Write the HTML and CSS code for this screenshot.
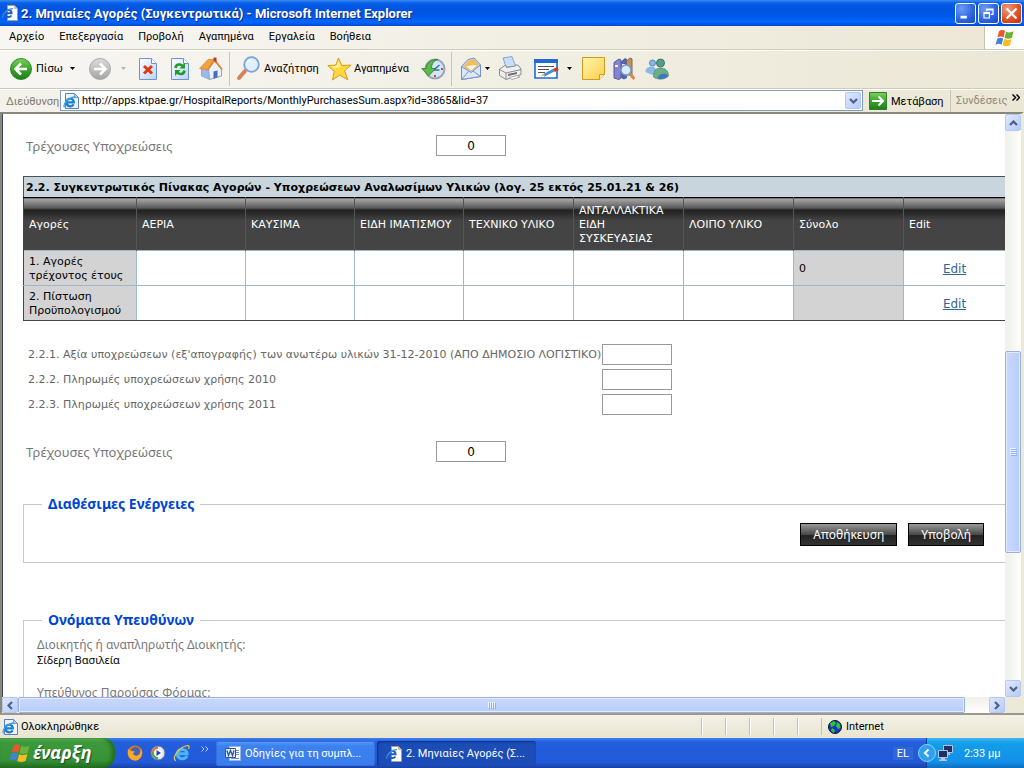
FILE: index.html
```html
<!DOCTYPE html>
<html lang="el">
<head>
<meta charset="utf-8">
<title>2. Μηνιαίες Αγορές (Συγκεντρωτικά) - Microsoft Internet Explorer</title>
<link rel="stylesheet" href="styles.css">
</head>
<body>
<svg class="defs" width="0" height="0" aria-hidden="true">
  <defs>
    <linearGradient id="gGreen" x1="0" y1="0" x2="0" y2="1"><stop offset="0" stop-color="#7bd25c"/><stop offset=".5" stop-color="#3aa52c"/><stop offset="1" stop-color="#1f7d1a"/></linearGradient>
    <linearGradient id="gGrey" x1="0" y1="0" x2="0" y2="1"><stop offset="0" stop-color="#dcdcdc"/><stop offset="1" stop-color="#a4a4a4"/></linearGradient>
    <linearGradient id="gPage" x1="0" y1="0" x2="1" y2="1"><stop offset="0" stop-color="#ffffff"/><stop offset="1" stop-color="#b9d2f8"/></linearGradient>
    <linearGradient id="gNote" x1="0" y1="0" x2="1" y2="1"><stop offset="0" stop-color="#fff6ae"/><stop offset="1" stop-color="#f8cf4c"/></linearGradient>
    <symbol id="winflag" viewBox="0 0 20 18">
      <path fill="#e8572b" d="M4 2.200C6 .8 8 .8 10 2L8.500 8.500C6.500 7.300 4.500 7.300 2.500 8.600Z"/>
      <path fill="#6cb33a" d="M11 2.500C13 3.700 15.500 3.700 18.500 2.300L17 8.800C14.500 10.100 12 10.100 9.500 9Z"/>
      <path fill="#3f83dc" d="M2.200 9.700C4.200 8.400 6.300 8.400 8.200 9.600L6.600 15.700C4.700 14.500 2.800 14.500.6 15.900Z"/>
      <path fill="#f8bd23" d="M9.200 10.100C11.500 11.200 14.200 11.200 16.700 9.900L15 16.200C12.500 17.500 9.800 17.500 7.500 16.300Z"/>
    </symbol>
    <symbol id="iepage" viewBox="0 0 16 16">
      <path fill="#fff" stroke="#a79f8a" d="M5.500.500h7l3 3v12h-10z"/>
      <path fill="#d9c9a3" stroke="#a79f8a" stroke-width=".6" d="M12.500.500v3h3z"/>
      <path fill="none" stroke="#1f5fc0" stroke-width="1.900" d="M3 8.300h6.600C9.600 4.300 3.600 4 3 8.200 2.700 12.300 7.600 13.200 9.400 10.400"/>
      <path fill="none" stroke="#3b93e4" stroke-width="1.200" d="M1 12.800C-.3 9.500 5.500 3.500 11 3.600"/>
    </symbol>
    <symbol id="iedoc" viewBox="0 0 16 16">
      <path fill="#eef3fb" stroke="#5f7fb5" d="M2.500.500h9l4 4v11h-13z"/>
      <path fill="#c3d3ec" stroke="#5f7fb5" stroke-width=".7" d="M11.500.500v4h4z"/>
      <path fill="none" stroke="#1c7fd0" stroke-width="2.200" d="M3.500 9.300h7.300C10.800 4.700 4 4.500 3.500 9.200 3.300 13.600 8.700 14.600 10.700 11.400"/>
      <path fill="none" stroke="#3ba3ea" stroke-width="1.300" d="M1.500 14.300C-.5 11 6 3.700 12.500 4"/>
    </symbol>
    <symbol id="ie" viewBox="0 0 18 18">
      <path fill="none" stroke="#4cb6f5" stroke-width="3" d="M4.500 9.700h9.700C14 4.200 5.300 3.800 4.300 9.500 4 15 11.500 16.500 14 12"/>
      <path fill="none" stroke="#e7c04b" stroke-width="1.300" d="M3 16.500C-1.500 15.500 4 6 10 3c5-2.600 7.300-1.500 5.500 2"/>
    </symbol>
  </defs>
</svg>
<div class="window">
  <header class="titlebar">
    <svg class="i16" viewBox="0 0 16 16"><use href="#iepage"/></svg>
    <h1>2. Μηνιαίες Αγορές (Συγκεντρωτικά) - Microsoft Internet Explorer</h1>
    <div class="caption-buttons">
      <button class="cap" aria-label="Ελαχιστοποίηση"><svg viewBox="0 0 21 21"><path fill="#fff" d="M5 13h7v3H5z"/></svg></button>
      <button class="cap" aria-label="Επαναφορά"><svg viewBox="0 0 21 21"><path fill="none" stroke="#fff" stroke-width="1.300" d="M8.500 8V5.500h7v6H13M8 6.500h7"/><path fill="none" stroke="#fff" stroke-width="1.300" d="M5.500 9.500h6v6h-6zM5 10.500h7"/></svg></button>
      <button class="cap close" aria-label="Κλείσιμο"><svg viewBox="0 0 21 21"><path stroke="#fff" stroke-width="2.400" d="M5 5l11 11M16 5L5 16"/></svg></button>
    </div>
  </header>

  <nav class="menubar">
    <div class="menus">
      <button>Αρχείο</button><button>Επεξεργασία</button><button>Προβολή</button><button>Αγαπημένα</button><button>Εργαλεία</button><button>Βοήθεια</button>
    </div>
    <div class="brand"><svg width="20" height="18"><use href="#winflag"/></svg></div>
  </nav>

  <div class="toolbar">
    <button class="tool back"><svg width="24" height="24" viewBox="0 0 24 24"><circle cx="12" cy="12" r="10.500" fill="url(#gGreen)" stroke="#2f8a29"/><path fill="none" stroke="#fff" stroke-width="2.600" d="M18 12H7.500M12 6.500L6.500 12l5.500 5.500"/></svg><span>Πίσω</span></button>
    <button class="drop" aria-label="Ιστορικό πίσω"><svg width="5" height="3" viewBox="0 0 5 3"><path d="M0 0h5L2.500 3z"/></svg></button>
    <button class="tool fwd" aria-label="Εμπρός"><svg width="24" height="24" viewBox="0 0 24 24"><circle cx="12" cy="12" r="10.500" fill="url(#gGrey)" stroke="#a9a9a9"/><path fill="none" stroke="#fff" stroke-width="2.600" d="M6 12h10.500M12 6.500l5.500 5.500-5.500 5.500"/></svg></button>
    <button class="drop off" aria-label="Ιστορικό εμπρός"><svg width="5" height="3" viewBox="0 0 5 3"><path fill="#b9b6a8" d="M0 0h5L2.500 3z"/></svg></button>
    <button class="tool" aria-label="Διακοπή"><svg width="20" height="24" viewBox="0 0 20 24"><path fill="url(#gPage)" stroke="#6d93d6" d="M1.500 1.500h12l5 5v16h-17z"/><path fill="#fff" stroke="#6d93d6" d="M13.500 1.500v5h5"/><path stroke="#dc3714" stroke-width="3" d="M6 9l8 7.500M14 9l-8 7.500"/></svg></button>
    <button class="tool refresh" aria-label="Ανανέωση"><svg width="20" height="24" viewBox="0 0 20 24"><path fill="url(#gPage)" stroke="#6d93d6" d="M1.500 1.500h12l5 5v16h-17z"/><path fill="#fff" stroke="#6d93d6" d="M13.500 1.500v5h5"/><path fill="none" stroke="#229a28" stroke-width="2.600" d="M5.500 11c.5-4 5-4.500 7-2M14.500 13.500c-.5 4-5 4.500-7 2"/><path fill="#229a28" d="M15 5.500v6H9.500zM5 19v-6h5.500z"/></svg></button>
    <button class="tool home" aria-label="Αρχική σελίδα"><svg width="24" height="24" viewBox="0 0 24 24"><path fill="#9db9e8" stroke="#6f8fcb" stroke-width=".6" d="M2.500 11v8l8 3.500V11z"/><path fill="#e9f1fd" stroke="#86a3d8" d="M9.500 12l6-8 7 8v7l-12 3.500z"/><path fill="#f2a33b" stroke="#c9782a" stroke-width=".6" d="M.5 11.500L9 2.500l6.500 0-6.500 10.500z"/><path fill="none" stroke="#e08a35" stroke-width="2" d="M8.500 13L15.500 3l7.500 9.500"/><path fill="#c63b22" d="M14.500.500h3v5l-3-2z"/><path fill="#4a6fb8" d="M14.500 14.500l4-1v7l-4 1.200z"/></svg></button>
    <span class="rule"></span>
    <button class="tool search"><svg width="24" height="25" viewBox="0 0 24 25"><path stroke="#d9825a" stroke-width="4" stroke-linecap="round" d="M3 22l6-7"/><circle cx="15.500" cy="8.500" r="7.300" fill="#dff0ff" stroke="#7f9fdc" stroke-width="1.800"/><path fill="#fff" d="M10.500 8c.5-3 3-4.500 5.500-4.300-2 .8-4 2.300-5.500 4.300z"/></svg><span>Αναζήτηση</span></button>
    <button class="tool favs"><svg width="25" height="24" viewBox="0 0 25 24"><path fill="#ffd93b" stroke="#d89a18" stroke-linejoin="round" d="M11.500 1l3.400 7.500 9.200-.4-6.600 5.700 3.400 9-8.300-4.700L5.500 23l1.700-8.700L.8 8.700l8-.7z"/><path fill="#fff2a0" d="M11.500 4l2 5.500-6 2-3-2 5-.5z"/></svg><span>Αγαπημένα</span></button>
    <button class="tool hist" aria-label="Ιστορικό"><svg width="25" height="24" viewBox="0 0 25 24"><circle cx="14" cy="12" r="9.500" fill="#d3e5f8" stroke="#9aa7b8" stroke-width="2"/><path fill="none" stroke="#3b6db0" stroke-width="1.500" d="M12.500 13l6-5M12.500 13h6"/><path fill="#d34b2c" d="M13 18h2v2h-2zM20 11h2v2h-2z"/><path fill="#5cba4a" stroke="#28792a" stroke-width=".8" d="M.8 11.500h4C6 5 11 2 17 2.500c-4 1-6.500 4-6.500 9h4.200L7.500 19z"/></svg></button>
    <span class="rule"></span>
    <button class="tool mail" aria-label="Αλληλογραφία"><svg width="22" height="24" viewBox="0 0 22 24"><path fill="#c4daf8" stroke="#7390c9" d="M1.500 9.500L8 2.500 14 1l6.500 7v11.500L1.500 22.500z"/><path fill="#f7bd5b" d="M3.500 9.500L8.500 3.500 14 2l5 6-8 6.500z"/><path fill="#fff" d="M6.500 9l10.500-1-6 5.500z"/><path fill="#dbe8fb" stroke="#7390c9" d="M1.500 9.500l9.500 6L20.500 8v11.500L1.500 22.500z"/><path fill="none" stroke="#7390c9" d="M1.500 22.500l7-8M20.500 19.500L13 14"/></svg></button>
    <button class="drop near" aria-label="Επιλογές αλληλογραφίας"><svg width="5" height="3" viewBox="0 0 5 3"><path d="M0 0h5L2.500 3z"/></svg></button>
    <button class="tool" aria-label="Εκτύπωση"><svg width="24" height="25" viewBox="0 0 24 25"><path fill="#c8defa" stroke="#88a4cf" d="M5 2l9-1.500L18 11H8z"/><path fill="#f0f0f0" stroke="#8c8c8c" d="M1.500 13L7 9.500h1l.5 2 9-1.500-.5-1h3l3 4v5.500L8 23.500l-6.500-4z"/><path fill="none" stroke="#8c8c8c" d="M1.500 13.500L8 17l15-3.500M8 17v6"/><path fill="#6f6f6f" d="M10 18l9-2v2l-9 2z"/><path fill="#fff" stroke="#aaa" d="M11 21.500l8-2 3 1.500-8 2.500z"/></svg></button>
    <button class="tool edit" aria-label="Επεξεργασία"><svg width="25" height="20" viewBox="0 0 25 20"><path fill="#fff" stroke="#1f6ad6" stroke-width="1.600" d="M1 1h22v18H1z"/><path fill="#1f6ad6" d="M0 0h24v4H0z"/><path stroke="#555" d="M4 7.500h16M4 10.500h11M4 13.500h7"/><path stroke="#3f8fe0" stroke-width="3" d="M9.500 16.500L20 11"/><path stroke="#d03c25" stroke-width="3.500" d="M20 11.500l4-2"/><path fill="#f0b85a" d="M6.500 17.500l3-3 1.500 2z"/></svg></button>
    <button class="drop after-edit" aria-label="Επιλογές επεξεργασίας"><svg width="5" height="3" viewBox="0 0 5 3"><path d="M0 0h5L2.500 3z"/></svg></button>
    <button class="tool note" aria-label="Σημείωση"><svg width="23" height="23" viewBox="0 0 23 23"><path fill="url(#gNote)" stroke="#d39a1c" d="M.5.500h22v17l-5 5H.500z"/><path fill="#fff0a0" stroke="#d39a1c" d="M17.500 22.500v-5h5"/></svg></button>
    <button class="tool books" aria-label="Έρευνα"><svg width="22" height="24" viewBox="0 0 22 24"><path fill="#8683d0" stroke="#5a57a0" d="M1 5.500l5-3.500 2 1v18l-2 1.500-5-1.500z"/><path fill="#4f66b5" d="M8 4.500L12 1l2 1v19l-3 1.500-3-1.500z"/><path fill="#b99560" stroke="#86683e" d="M13.500 4l3.500-3 2 1v16h-5.500z"/><path fill="#eee" d="M2 8h3v2H2zM9 7h3v2H9z"/><circle cx="13" cy="13" r="5" fill="#d8ecfd" stroke="#7a97cc" stroke-width="1.500"/><path stroke="#d38a4c" stroke-width="3" d="M17 17l4.500 5"/></svg></button>
    <button class="tool" aria-label="Messenger"><svg width="24" height="22" viewBox="0 0 24 22"><circle cx="7.500" cy="5" r="3" fill="#8fb4e4" stroke="#5d87c4"/><path fill="#8db7e6" d="M.5 14c0-4 3-5.500 6-5.500s5 2 5 6l-4 2.500z"/><circle cx="15.500" cy="5" r="4" fill="#5a9c8a" stroke="#34796b"/><path fill="#6cae88" stroke="#3d8068" stroke-width=".6" d="M8.500 19c0-7 3-9 7-9s8 2 8 8c-4 4-11 4-15 1z"/><path fill="#3f78c0" d="M13 18.500c2-3 7-4 10-1-1 3-6 4-10 3z"/></svg></button>
  </div>

  <div class="addressbar">
    <label for="url">Διεύθυνση</label>
    <div class="urlbox">
      <svg class="i16" viewBox="0 0 16 16"><use href="#iedoc"/></svg>
      <input id="url" type="text" value="http://apps.ktpae.gr/HospitalReports/MonthlyPurchasesSum.aspx?id=3865&amp;lid=37">
      <button class="xpbtn" aria-label="Λίστα διευθύνσεων"><svg width="9" height="6" viewBox="0 0 9 6"><path fill="none" stroke="#4d6185" stroke-width="2.200" d="M1 1l3.500 3.500L8 1"/></svg></button>
    </div>
    <button class="go"><svg width="18" height="18" viewBox="0 0 18 18"><path fill="url(#gGreen)" stroke="#2c7f2c" d="M.5.500h17v17H.500z"/><path fill="none" stroke="#fff" stroke-width="2" d="M3 9h11M9.500 4.500L14 9l-4.500 4.500"/></svg><span>Μετάβαση</span></button>
    <div class="links"><span>Συνδέσεις</span><svg width="8" height="7" viewBox="0 0 8 7"><path fill="none" stroke="#000" stroke-width="1.500" d="M.5.500l3 3-3 3M4.500.500l3 3-3 3"/></svg></div>
  </div>

  <div class="viewport">
    <main class="page">
      <div class="current">
        <label for="cur1">Τρέχουσες Υποχρεώσεις</label><input id="cur1" class="num" type="text" value="0">
      </div>

      <table class="grid">
        <caption>2.2. Συγκεντρωτικός Πίνακας Αγορών - Υποχρεώσεων Αναλωσίμων Υλικών (λογ. 25 εκτός 25.01.21 &amp; 26)</caption>
        <colgroup><col class="c-first"><col class="c-a"><col class="c-a"><col class="c-a"><col class="c-b"><col class="c-b"><col class="c-b"><col class="c-b"><col></colgroup>
        <thead><tr><th>Αγορές</th><th>ΑΕΡΙΑ</th><th>ΚΑΥΣΙΜΑ</th><th>ΕΙΔΗ ΙΜΑΤΙΣΜΟΥ</th><th>ΤΕΧΝΙΚΟ ΥΛΙΚΟ</th><th>ΑΝΤΑΛΛΑΚΤΙΚΑ ΕΙΔΗ ΣΥΣΚΕΥΑΣΙΑΣ</th><th>ΛΟΙΠΟ ΥΛΙΚΟ</th><th>Σύνολο</th><th>Edit</th></tr></thead>
        <tbody>
          <tr><td class="shade">1. Αγορές τρέχοντος έτους</td><td></td><td></td><td></td><td></td><td></td><td></td><td class="shade">0</td><td class="act"><a href="#">Edit</a></td></tr>
          <tr><td class="shade">2. Πίστωση Προϋπολογισμού</td><td></td><td></td><td></td><td></td><td></td><td></td><td class="shade"></td><td class="act"><a href="#">Edit</a></td></tr>
        </tbody>
      </table>

      <div class="values">
        <label for="v1">2.2.1. Αξία υποχρεώσεων (εξ'απογραφής) των ανωτέρω υλικών 31-12-2010 (ΑΠΟ ΔΗΜΟΣΙΟ ΛΟΓΙΣΤΙΚΟ)</label><input id="v1" class="num" type="text">
        <label for="v2">2.2.2. Πληρωμές υποχρεώσεων χρήσης 2010</label><input id="v2" class="num" type="text">
        <label for="v3">2.2.3. Πληρωμές υποχρεώσεων χρήσης 2011</label><input id="v3" class="num" type="text">
      </div>

      <div class="current second">
        <label for="cur2">Τρέχουσες Υποχρεώσεις</label><input id="cur2" class="num" type="text" value="0">
      </div>

      <fieldset class="actions">
        <legend>Διαθέσιμες Ενέργειες</legend>
        <div class="buttons"><button class="dark">Αποθήκευση</button><button class="dark">Υποβολή</button></div>
      </fieldset>

      <fieldset class="names">
        <legend>Ονόματα Υπευθύνων</legend>
        <dl>
          <dt>Διοικητής ή αναπληρωτής Διοικητής:</dt><dd>Σίδερη Βασιλεία</dd>
          <dt>Υπεύθυνος Παρούσας Φόρμας:</dt>
        </dl>
      </fieldset>
    </main>
    <div class="vscroll">
      <button class="xpbtn" aria-label="Πάνω"><svg width="9" height="6" viewBox="0 0 9 6"><path fill="none" stroke="#4d6185" stroke-width="2.200" d="M1 5l3.500-3.500L8 5"/></svg></button>
      <div class="track"><div class="before"></div><div class="thumb"><svg width="7" height="8" viewBox="0 0 7 8"><path stroke="#eef4ff" d="M0 .500h6M0 2.500h6M0 4.500h6M0 6.500h6"/><path stroke="#8cb0f8" d="M1 1.500h6M1 3.500h6M1 5.500h6M1 7.500h6"/></svg></div><div class="after"></div></div>
      <button class="xpbtn" aria-label="Κάτω"><svg width="9" height="6" viewBox="0 0 9 6"><path fill="none" stroke="#4d6185" stroke-width="2.200" d="M1 1l3.500 3.500L8 1"/></svg></button>
    </div>
    <div class="hscroll">
      <button class="xpbtn" aria-label="Αριστερά"><svg width="6" height="9" viewBox="0 0 6 9"><path fill="none" stroke="#4d6185" stroke-width="2.200" d="M5 1L1.500 4.500 5 8"/></svg></button>
      <div class="track"><div class="thumb"><svg width="8" height="7" viewBox="0 0 8 7"><path stroke="#eef4ff" d="M.5 0v6M2.500 0v6M4.500 0v6M6.500 0v6"/><path stroke="#8cb0f8" d="M1.500 1v6M3.500 1v6M5.500 1v6M7.500 1v6"/></svg></div><div class="after"></div></div>
      <button class="xpbtn" aria-label="Δεξιά"><svg width="6" height="9" viewBox="0 0 6 9"><path fill="none" stroke="#4d6185" stroke-width="2.200" d="M1 1l3.500 3.500L1 8"/></svg></button>
    </div>
    <div class="corner"></div>
  </div>

  <footer class="statusbar">
    <div class="state"><svg class="i16" viewBox="0 0 16 16"><use href="#iedoc"/></svg><span>Ολοκληρώθηκε</span></div>
    <i></i><i></i><i></i><i></i><i></i>
    <div class="zone"><svg width="14" height="14" viewBox="0 0 14 14"><circle cx="7" cy="7" r="6.500" fill="#1634c8" stroke="#111"/><path fill="#2fc32f" d="M2 3l4-2 2 2-2 3-3 1zM9 2l3 2 .5 4L10 9 8 6zM4 8l3 2-1 3-3-2z"/></svg><span>Internet</span></div>
  </footer>
</div>

<div class="taskbar">
  <button class="start"><svg width="22" height="20"><use href="#winflag"/></svg><span>έναρξη</span></button>
  <div class="quick">
    <svg width="16" height="16" viewBox="0 0 16 16"><circle cx="8" cy="8" r="7.500" fill="#e8751a"/><circle cx="8.500" cy="6.500" r="4.500" fill="#3f64b8"/><path fill="#f9a928" d="M1 4l3 2 4 .5-2 2c1 3 5 3 7 0l1-5c3 6-1 12-6 12S0 11 1 4z"/></svg>
    <svg width="16" height="16" viewBox="0 0 16 16"><circle cx="8" cy="8" r="7" fill="#dfe8f5" stroke="#5671a8"/><path fill="#e5742c" d="M8 1.500v3A3.500 3.500 0 0 0 4.500 8h-3A6.500 6.500 0 0 1 8 1.500z"/><path fill="#4aa742" d="M8 14.500v-3A3.500 3.500 0 0 1 4.500 8h-3A6.500 6.500 0 0 0 8 14.500z"/><circle cx="8" cy="8" r="4" fill="#fff"/><path fill="#1d49b4" d="M6.500 5l4.500 3-4.500 3z"/></svg>
    <svg width="18" height="18"><use href="#ie"/></svg>
    <svg class="more" width="8" height="6" viewBox="0 0 8 6"><path fill="none" stroke="#b5cefa" d="M.5.500L3 3 .5 5.500M4.500.500L7 3 4.500 5.500"/></svg>
  </div>
  <div class="tasks">
    <button class="task"><svg class="i16" viewBox="0 0 16 16"><path fill="#fff" stroke="#9db4dd" d="M4.500.500h11v14h-11z"/><path stroke="#6f8fc8" d="M11 4.500h3M11 6.500h3M11 8.500h3M6 12.500h8"/><path fill="#e6edf9" stroke="#2b579a" d="M.5 2.500h10v9H.500z"/><path fill="none" stroke="#2b579a" stroke-width="1.300" d="M2 4.500l1.500 5 2-5 2 5 1.500-5"/></svg><span>Οδηγίες για τη συμπλ...</span></button>
    <button class="task active"><svg class="i16" viewBox="0 0 16 16"><use href="#iepage"/></svg><span>2. Μηνιαίες Αγορές (Σ...</span></button>
  </div>
  <span class="lang">EL</span>
  <div class="tray">
    <button class="chev" aria-label="Εμφάνιση κρυφών εικονιδίων"><svg width="18" height="18" viewBox="0 0 18 18"><circle cx="9" cy="9" r="8.500" fill="#2f9ff0" stroke="#8fd0fb"/><path fill="none" stroke="#fff" stroke-width="2" d="M10.500 5.500L7 9l3.500 3.500"/></svg></button>
    <svg width="15" height="16" viewBox="0 0 15 16"><path fill="#1c2f66" stroke="#b9c3da" d="M5.500.500h9v7h-9z"/><path fill="#1c2f66" stroke="#b9c3da" d="M.5 5.500h9v7h-9z"/><path fill="#b9c3da" d="M3 13h4v1.500h2V16H1v-1.500h2zM9 8h3v2H9z"/></svg>
    <time>2:33 μμ</time>
  </div>
</div>
</body>
</html>
```
FILE: styles.css
```css
* { box-sizing: border-box; }
html, body { height: 100%; margin: 0; }
body {
  display: flex;
  flex-direction: column;
  overflow: hidden;
  font-family: Roboto, "Noto Sans", sans-serif;
  font-size: 11px;
  color: #000;
  background: #ece9d8;
}
button { font: inherit; color: inherit; background: none; border: 0; padding: 0; margin: 0; white-space: nowrap; }
svg { display: block; flex: none; }
.defs { position: absolute; }
.i16 { width: 16px; height: 16px; }
.window { flex: 1; min-height: 0; display: flex; flex-direction: column; }

/* title bar */
.titlebar {
  flex: none;
  display: flex;
  align-items: center;
  height: 26px;
  padding: 0 2px;
  gap: 3px;
  background: linear-gradient(#3a8cf5 0, #0a5fe8 3px, #0054e0 9px, #0058ea 16px, #0266fe 22px, #0048d0 26px);
}
.titlebar h1 {
  flex: 1;
  margin: 0;
  font: bold 13px Roboto, "Noto Sans", sans-serif;
  color: #fff;
  text-shadow: 1px 1px 0 #0a2a80;
  white-space: nowrap;
}
.caption-buttons { display: flex; gap: 2px; }
.cap {
  width: 21px;
  height: 21px;
  border: 1px solid #fff;
  border-radius: 3px;
  background: radial-gradient(circle at 30% 25%, #6b9cf5, #2a62e0 60%, #1a49c8);
}
.cap svg { width: 19px; height: 19px; }
.cap.close { background: radial-gradient(circle at 30% 25%, #f09a80, #df4c22 60%, #b8330e); }

/* menu bar */
.menubar {
  flex: none;
  display: flex;
  height: 24px;
  border-bottom: 1px solid #d0ccb8;
  background: linear-gradient(90deg, #f7f6f3, #ece7d5);
}
.menus { flex: 1; display: flex; gap: 15px; padding: 0 0 2px 9px; }
.brand {
  width: 40px;
  display: flex;
  align-items: center;
  justify-content: center;
  background: #fff;
  border-left: 1px solid #c5c2b0;
}

/* tool bar */
.toolbar {
  flex: none;
  display: flex;
  align-items: center;
  height: 39px;
  padding: 0 0 2px 9px;
  border-top: 1px solid #fff;
  border-bottom: 1px solid #cfcab6;
  background: linear-gradient(90deg, #f7f6f3, #ece7d5);
}
.tool { display: flex; align-items: center; gap: 3px; margin-right: 12px; }
.drop { width: 5px; margin-right: 13px; }
.tool.back { width: 61px; margin-right: 0; }
.tool.fwd { margin-right: 9px; }
.drop.off { margin-right: 12px; }
.tool.refresh { margin-right: 9px; }
.tool.home { margin-right: 6px; }
.rule { width: 1px; height: 34px; margin-right: 6px; background: #c9c5b2; }
.tool.search { width: 79px; gap: 4px; }
.tool.favs { width: 83px; gap: 2px; margin-right: 11px; }
.tool.hist { margin-right: 5px; }
.tool.mail { margin: 0 3px 0 2px; }
.drop.near { margin-right: 8px; }
.tool.edit, .tool.note { margin-right: 8px; }
.drop.after-edit, .tool.books { margin-right: 10px; }

/* address bar */
.addressbar {
  flex: none;
  display: flex;
  align-items: stretch;
  height: 23px;
  border-top: 1px solid #fff;
  background: linear-gradient(90deg, #f4f2ec, #ece7d5);
}
.addressbar label { display: flex; align-items: center; width: 60px; padding-left: 6px; color: #7d7a6e; }
.urlbox { flex: 1; display: flex; align-items: center; margin-bottom: 1px; padding: 0 1px 0 2px; background: #fff; border: 1px solid #7f9db9; }
.urlbox input { flex: 1; min-width: 0; height: 18px; padding: 0 0 0 3px; border: 0; background: none; font: inherit; outline: 0; }
.xpbtn {
  flex: none;
  display: flex;
  align-items: center;
  justify-content: center;
  width: 16px;
  height: 17px;
  border: 1px solid #b4c8f6;
  border-radius: 2px;
  background: linear-gradient(135deg, #dfe9ff, #b5cafb);
}
.go { display: flex; align-items: center; gap: 4px; width: 88px; padding-left: 6px; border-right: 1px solid #c9c5b2; }
.links { display: flex; justify-content: space-between; width: 73px; padding: 4px 4px 0 5px; color: #8b887b; }

/* page area */
.viewport {
  flex: 1;
  min-height: 0;
  display: grid;
  grid-template-columns: minmax(0, 1fr) 16px;
  grid-template-rows: minmax(0, 1fr) 16px;
  border-top: 2px solid #8b887a;
  border-left: 2px solid #8b887a;
  border-right: 3px solid #ece9d8;
}
.page {
  overflow: hidden;
  padding: 21px 0 0 20px;
  border-left: 1px solid #33476a;
  background: #fff;
  font-family: "DejaVu Sans", sans-serif;
}
.num {
  width: 70px;
  height: 21px;
  padding: 0;
  border: 1px solid #999;
  background: #fff;
  font: 12px "DejaVu Sans", sans-serif;
  text-align: center;
}
.current {
  display: grid;
  grid-template-columns: 410px 70px;
  align-items: center;
  padding-left: 3px;
  font: 13px "Noto Sans", sans-serif;
  color: #777;
}
.grid {
  width: 100%;
  margin-top: 20px;
  table-layout: fixed;
  border-collapse: collapse;
  border-bottom: 1px solid #444;
  border-left: 1px solid #444;
  line-height: 14px;
}
.grid caption {
  height: 21px;
  padding-left: 2px;
  border: 1px solid #47525a;
  border-right: 0;
  border-bottom: 0;
  background: #c8d5dc;
  font-weight: bold;
  line-height: 21px;
  text-align: left;
  white-space: nowrap;
}
.c-first { width: 113px; }
.c-a { width: 109px; }
.c-b { width: 110px; }
.grid th {
  height: 53px;
  padding: 1px 5px 0;
  border-top: 1px solid #000;
  border-right: 1px solid #555;
  background: linear-gradient(#ababab 0, #555 10px, #222 11px, #282828 14px, #444 22px);
  color: #fff;
  font-weight: normal;
  text-align: left;
}
.grid td { height: 35px; padding: 2px 5px 0; border: 1px solid #9cb8ca; }
.grid td:first-child { border-left-color: #444; }
.grid tr:last-child td { border-bottom-color: #444; }
.grid th:last-child, .grid td:last-child { border-right: 0; }
.grid td.shade { background: #d3d3d3; }
.grid td.act { text-align: center; }
.grid a { color: #2f6592; font-size: 12px; }
.values {
  display: grid;
  grid-template-columns: 574px 70px;
  align-items: center;
  row-gap: 4px;
  margin-top: 23px;
  padding-left: 5px;
  color: #666;
}
.values label { white-space: nowrap; }
.current.second { margin-top: 26px; }

fieldset { margin: 0; padding: 0; border: 1px solid #c8c8c8; border-right: 0; min-width: 0; }
legend { margin-left: 18px; padding: 0 6px; font: bold 14px/20px "Noto Sans", sans-serif; color: #0046d5; }
.actions { margin-top: 32px; padding-bottom: 16px; }
.buttons { display: flex; justify-content: flex-end; gap: 11px; padding: 9px 21px 0 0; }
.dark {
  height: 23px;
  padding: 0 12px;
  border: 1px solid #000;
  background: linear-gradient(#999, #4a4a4a 50%, #222 55%, #333);
  color: #fff;
  font: 12px "Noto Sans", sans-serif;
}
.names { margin-top: 47px; padding: 7px 0 0 13px; }
.names legend { margin-left: 5px; }
.names dl { margin: 0; font: 12px/15px "Noto Sans", sans-serif; white-space: nowrap; }
.names dt { color: #777; }
.names dd { margin: 0 0 18px; font-size: 11px; }

/* scroll bars */
.vscroll { display: flex; flex-direction: column; background: linear-gradient(90deg, #f0f0ea, #fefefb); }
.track { flex: 1; display: flex; min-width: 0; min-height: 0; }
.vscroll .track { flex-direction: column; }
.thumb {
  display: flex;
  align-items: center;
  justify-content: center;
  border: 1px solid #98b1e8;
  border-radius: 2px;
  box-shadow: inset 0 0 0 1px #e3ecff;
  background: linear-gradient(90deg, #c9d8fc, #b9cdfb);
}
.vscroll .before { flex: 221; }
.vscroll .thumb { flex: 201; }
.vscroll .after { flex: 127; }
.hscroll { display: flex; background: linear-gradient(#f0f0ea, #fefefb); }
.hscroll .xpbtn { height: 16px; }
.hscroll .thumb { flex: 947; background: linear-gradient(#c9d8fc, #b9cdfb); }
.hscroll .after { flex: 24; }
.corner { background: #ece9d8; }

/* status bar */
.statusbar {
  flex: none;
  display: flex;
  align-items: center;
  height: 25px;
  border-top: 2px solid #9c998a;
  background: linear-gradient(#f3f1e6, #e9e5d2);
}
.state { flex: 1; display: flex; align-items: center; gap: 3px; padding-left: 2px; }
.statusbar i { width: 24px; height: 17px; border-left: 1px solid #c5c1ae; box-shadow: inset 1px 0 0 #fff; }
.zone { display: flex; align-items: center; gap: 4px; width: 203px; height: 17px; padding-left: 6px; border-left: 1px solid #c5c1ae; }

/* task bar */
.taskbar {
  flex: none;
  display: flex;
  align-items: stretch;
  height: 30px;
  color: #fff;
  background: linear-gradient(#3c81f3 0, #245edb 4px, #225ad9 24px, #1941a5 30px);
}
.start {
  display: flex;
  align-items: center;
  gap: 2px;
  width: 115px;
  padding-left: 9px;
  border-radius: 0 12px 12px 0;
  background: linear-gradient(#6fbf6c 0, #3c9a3b 4px, #389237 22px, #226c22 30px);
  box-shadow: inset -3px 0 4px #1f6a1f;
  font: italic bold 18px "Noto Sans", sans-serif;
  text-shadow: 1px 1px 1px #1b4d1b;
}
.start span { padding-bottom: 3px; }
.quick { display: flex; align-items: center; gap: 7px; width: 101px; padding-left: 12px; }
.quick .more { align-self: flex-start; margin: 8px 0 0 3px; }
.tasks { flex: 1; display: flex; gap: 2px; padding: 3px 0 2px; min-width: 0; }
.task {
  display: flex;
  align-items: center;
  gap: 4px;
  width: 159px;
  padding-left: 9px;
  border-radius: 3px;
  background: linear-gradient(#5a9afa, #3c81f0 5px, #3a7cec);
  box-shadow: inset 0 0 0 1px #3570dc;
}
.task.active { background: #1c4cb6; box-shadow: inset 1px 1px 2px #0e2f80; }
.lang { align-self: center; margin-right: 13px; padding: 0 4px; background: #2f68d6; }
.tray {
  display: flex;
  align-items: center;
  width: 98px;
  gap: 2px;
  border-left: 1px solid #10429c;
  background: linear-gradient(#3fb4f4 0, #139ee9 5px, #1290e8 24px, #0d6dbd 30px);
}
.chev { margin-left: -9px; }
.tray time { flex: 1; padding-left: 9px; white-space: nowrap; }
```
